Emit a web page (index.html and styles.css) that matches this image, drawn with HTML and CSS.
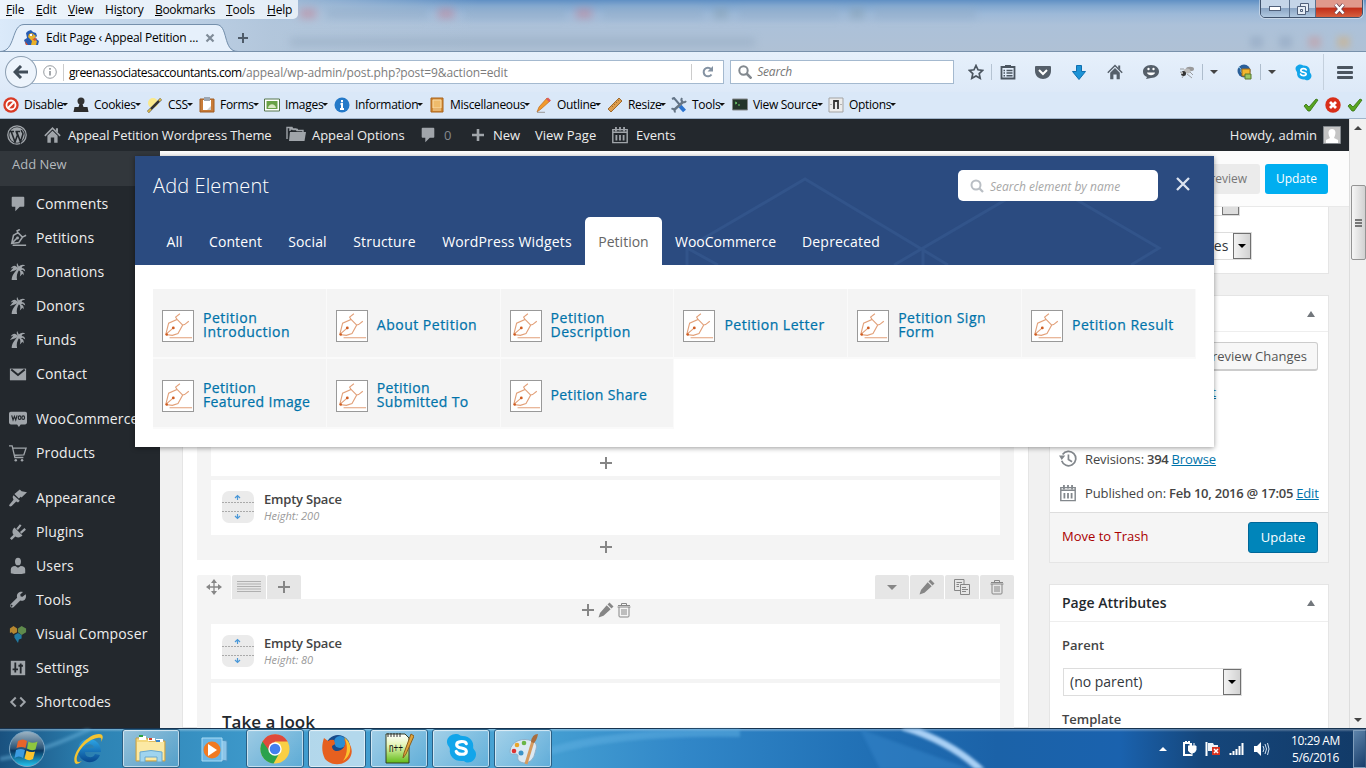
FILE: index.html
```html
<!DOCTYPE html>
<html lang="en">
<head>
<meta charset="utf-8">
<title>Edit Page ‹ Appeal Petition</title>
<link rel="stylesheet" href="styles.css">
</head>
<body>
<svg class="defs" width="0" height="0">
  <defs>
    <symbol id="nib" viewBox="0 0 32 32"><path d="M3 25 6 13 15 9l6 6-5 9-6 2zM15 9l-1.500-2.500L18 3M21 15l2-.5 4.500-3.500M3 25l8-7M7 28.500h24" fill="none" stroke="currentColor" stroke-width="1.200"/><circle cx="11" cy="18" r="1.500" class="nib-dot"/><circle cx="4" cy="25" r="1.300" class="nib-dot"/></symbol>
    <symbol id="bubble" viewBox="0 0 20 20"><path d="M4 2h12q1 0 1 1v9q0 1-1 1h-4l-5 5v-5H4q-1 0-1-1V3q0-1 1-1z" fill="currentColor"/></symbol>
    <symbol id="petition" viewBox="0 0 20 20"><path d="M3 16 5 7l5-3 5 5-4 6zM10 4 9 2l3-1.500M15 9l4-2M3 16l6-6M4 18h15" fill="none" stroke="currentColor" stroke-width="1.700"/><circle cx="9.500" cy="10" r="1.600" fill="currentColor"/></symbol>
    <symbol id="palm" viewBox="0 0 20 20"><path d="M10 6C8 2 4 2 2 6l3-1-4 5 6-2 2-1C6 11 3 14 3 19h6c-1-4 0-8 2-11 2 1 2 4 1 7l3-3 1 2c1-3 0-5-3-6l2-.5 3 2c0-3-2-4-4-4l1-2 3-.5c-2-2-5-1-7 1L9 0C8 2 9 4 10 6z" fill="currentColor"/></symbol>
    <symbol id="mail" viewBox="0 0 20 20"><path d="M1 4h18v13H1z" fill="currentColor"/><path d="m2.500 5 7.500 6 7.500-6" fill="none" stroke="#23282d" stroke-width="2.200"/></symbol>
    <symbol id="woo" viewBox="0 0 20 20"><path d="M2 2h16q2 0 2 2v10q0 2-2 2h-5l-2 3-2-3H2q-2 0-2-2V4q0-2 2-2z" fill="currentColor"/><path d="m3 6 1.500 5L6 7l1.500 4L9 6" fill="none" stroke="#23282d" stroke-width="1.300"/><ellipse cx="11.800" cy="8.500" rx="1.500" ry="2" fill="none" stroke="#23282d" stroke-width="1.300"/><ellipse cx="15.800" cy="8.500" rx="1.500" ry="2" fill="none" stroke="#23282d" stroke-width="1.300"/></symbol>
    <symbol id="cart" viewBox="0 0 20 20"><path d="M0 2h3.500l3 13H16M4 4.500h15l-2.500 7.500-10.500.5" fill="none" stroke="currentColor" stroke-width="1.400"/><circle cx="7.500" cy="18" r="1.400" fill="currentColor"/><circle cx="14.500" cy="18" r="1.400" fill="currentColor"/></symbol>
    <symbol id="brush" viewBox="0 0 20 20"><path d="m9 3 3-2.500 2 2 6 1-6 6-1-1-2 2-5-5zM5 7l7 6-2 2-2-1-5 5q-2 1-3-1l5-6-1-3z" fill="currentColor"/></symbol>
    <symbol id="plug" viewBox="0 0 20 20"><path d="m6 5 9 9c-2 2-5 3-8 1l-4 4-2-2 4-4C3 10 4 7 6 5z" fill="currentColor"/><path d="m9 7 4-5M13 11l5-4.500" stroke="currentColor" stroke-width="2.400"/></symbol>
    <symbol id="user" viewBox="0 0 20 20"><ellipse cx="10" cy="5" rx="3.300" ry="4.300" fill="currentColor"/><path d="M2 18v-4q0-4 5-4l3 2 3-2q5 0 5 4v4q-8 2-16 0z" fill="currentColor"/></symbol>
    <symbol id="wrench" viewBox="0 0 20 20"><path d="m18.500 3.500-3.500 3-2-.5-.5-2 3-3C11 0 8 3 9 7.500L1.500 15q-1 2 .5 3t3 0l7.500-7.500C17 12 20 8 18.500 3.500zM3.500 17a1 1 0 1 1 .1-.1z" fill="currentColor"/></symbol>
    <symbol id="vc" viewBox="0 0 20 20"><path d="m1 4 4-3 4 3v4L5 10l-2-2-2 1z" fill="#b5862f"/><path d="m10 4 4-3 5 3v4l-5 3-4-3z" fill="#5f8a4c"/><path d="m6 11 4-2 4 2v4l-3 1-1 4-4-6z" fill="#227ba3"/></symbol>
    <symbol id="sliders" viewBox="0 0 20 20"><path d="M2 2h16v16H2z" fill="currentColor"/><path d="M7 4v11M4 11.500h6M13 5v11M10.500 7.500h5" stroke="#23282d" stroke-width="2"/></symbol>
    <symbol id="code" viewBox="0 0 20 20"><path d="m7.500 5-5 5 5 5M12.500 5l5 5-5 5" fill="none" stroke="currentColor" stroke-width="2.200"/></symbol>
    <symbol id="cal" viewBox="0 0 20 20"><path d="M2 4h16v14.500H2zM2 7h16" fill="none" stroke="currentColor" stroke-width="1.600"/><path d="M5.500 1v5M14.500 1v5M10 1v4M6 10v6M10 10v6M14 10v6" stroke="currentColor" stroke-width="2"/></symbol>
    <symbol id="trash" viewBox="0 0 16 16"><path d="M2 3.500h12M1.500 5h13M5.500 3V1.500h5V3M3 5v9q0 1 1 1h8q1 0 1-1V5M6 7v6M8 7v6M10 7v6" fill="none" stroke="currentColor"/></symbol>
    <symbol id="pencil" viewBox="0 0 16 16"><path d="m11.500.5 4 4-2 2-4-4zM8.700 3.300l4 4-7.200 6.500L.5 15.500 2 11z" fill="currentColor"/></symbol>
    <symbol id="plus" viewBox="0 0 16 16"><path d="M8 2v12M2 8h12" stroke="currentColor" stroke-width="2"/></symbol>
    <symbol id="spacer" viewBox="0 0 32 32"><rect width="32" height="32" rx="7" fill="#ebebeb"/><path d="M0 11.500h32M0 20.500h32" stroke="#aaa" stroke-dasharray="2 1"/><path d="M15.500 9V4.500M13 7l2.500-2.500L18 7M15.500 23v4.500M13 25l2.500 2.500L18 25" fill="none" stroke="#4a98d8" stroke-width="1.200"/></symbol>
    <symbol id="check" viewBox="0 0 16 16"><path d="m1 9 2-2 3 3 7-8 2 1-8 11H5z" fill="#57a51f" stroke="#326f0d" stroke-width=".8"/></symbol>
    <symbol id="homeic" viewBox="0 0 20 20"><path d="m1 11 9-9 9 9" fill="none" stroke="currentColor" stroke-width="1.800"/><path d="m10 5 6 6v8h-4v-6H8v6H4v-8zM14 2h2.500v5L14 5z" fill="currentColor"/></symbol>
    <symbol id="skype" viewBox="0 0 32 32"><path d="M10 1C14 1 14 3 17 3c8 0 12 6 11 12 0 2 3 3 3 7 0 6-6 10-11 8-1-1-2-1-4-1C8 29 3 23 4 17 4 14 1 13 1 9c0-5 5-8 9-8z" fill="#12a5ea"/><path d="M21 11c-1-3-10-3-10 1 0 5 10 2 10 7 0 4-9 4-10.500 0" fill="none" stroke="#fff" stroke-width="3.200" stroke-linecap="round"/></symbol>
    <linearGradient id="orbg" x1="0" y1="0" x2="0" y2="1"><stop offset="0" stop-color="#9fb5c4"/><stop offset=".48" stop-color="#2b5578"/><stop offset=".55" stop-color="#093660"/><stop offset="1" stop-color="#22c5ef"/></linearGradient>
    <linearGradient id="ieg" x1="0" y1="0" x2="0" y2="1"><stop offset="0" stop-color="#2da6e6"/><stop offset="1" stop-color="#07488f"/></linearGradient>
    <linearGradient id="grn" x1="0" y1="0" x2="0" y2="1"><stop offset="0" stop-color="#fff"/><stop offset=".4" stop-color="#e4f5b4"/><stop offset="1" stop-color="#61bb19"/></linearGradient>
  </defs>
</svg>

<div class="screen">
  <header class="titlebar">
    <div class="ghosts"><i class="red"></i><i class="txt"></i><i class="red"></i><i class="txt"></i><i class="red"></i><i class="txt"></i><i class="grey"></i><i class="txt"></i><i class="grey"></i><i class="txt"></i></div>
    <div class="ghost-url"></div>
    <div class="ghost-tools"><i></i><i></i><i class="r"></i><i class="o"></i></div>
    <nav class="menu"><span><u>F</u>ile</span><span><u>E</u>dit</span><span><u>V</u>iew</span><span>Hi<u>s</u>tory</span><span><u>B</u>ookmarks</span><span><u>T</u>ools</span><span><u>H</u>elp</span></nav>
    <div class="tabstrip">
      <svg class="tabshape" width="250" height="29" viewBox="0 0 250 29"><path d="M0 28C16 28 11 1 24 1H216C229 1 222 28 238 28H250V29H0z" fill="#e6f0fb"/><path d="M0 27.500C16 27.500 11 .5 24 .5H216C229 .5 222 27.500 238 27.500H250" fill="none" stroke="#7590ac"/></svg>
      <div class="tab">
        <svg width="17" height="16" viewBox="0 0 17 16"><path d="M2 3 4 1l3-1 2 2 3 1 1 3-2 2 4 3-1 4H2l-2-5 3-2z" fill="#285bb0"/><path d="m5 4 3-1 4 3-2 3 3 2-1 4H7l1-4-4-4z" fill="#e8b12a"/><path d="m1 11 3 4H2zM8 9l5-1-2 3z" fill="#e5502a"/><path d="M6 4h3v2H6z" fill="#fff"/><path d="M8 4.500h1v1H8z" fill="#111"/></svg>
        <span class="tabname">Edit Page ‹ Appeal Petition ...</span>
        <svg width="10" height="10" viewBox="0 0 10 10"><path d="m1.500 1.500 7 7m0-7-7 7" stroke="#7f8b98" stroke-width="2.200"/></svg>
      </div>
      <svg class="newtab" width="12" height="12" viewBox="0 0 12 12"><path d="M6 1v10M1 6h10" stroke="#4e5b69" stroke-width="2"/></svg>
    </div>
    <div class="winbtns">
      <span class="wb"><svg width="13" height="6"><rect x=".5" y=".5" width="11" height="4" fill="#fff" stroke="#50607a"/></svg></span>
      <span class="wb mid"><svg width="12" height="12"><path d="M3.500 3V.5h8v8H9M.5 3.500h8v8h-8zM3.500 6.500h2v2h-2z" fill="#e6edf5" stroke="#50607a"/></svg></span>
      <span class="wb close"><svg width="13" height="12" viewBox="0 0 13 12"><path d="m2.500 1.500 8 9m0-9-8 9" stroke="#6a4352" stroke-width="4"/><path d="m2.500 1.500 8 9m0-9-8 9" stroke="#fff" stroke-width="2.500"/></svg></span>
    </div>
  </header>

  <div class="navbar">
    <span class="back"><svg width="16" height="14" viewBox="0 0 16 14"><path d="M8 1 2 7l6 6M2.500 7H15" fill="none" stroke="#414d59" stroke-width="3"/></svg></span>
    <div class="urlbar">
      <svg class="info" width="14" height="14" viewBox="0 0 14 14"><circle cx="7" cy="7" r="6.300" fill="none" stroke="#969ba0"/><path d="M7 6v4.500M7 3v1.700" stroke="#858a90" stroke-width="1.500"/></svg>
      <span class="url"><b>greenassociatesaccountants.com</b>/appeal/wp-admin/post.php?post=9&amp;action=edit</span>
      <span class="reload"><svg width="12" height="12" viewBox="0 0 12 12"><path d="M9.500 8.500A4.300 4.300 0 1 1 9 3" fill="none" stroke="#8492a2" stroke-width="2"/><path d="M11 0v5.500H5.500z" fill="#8492a2"/></svg></span>
    </div>
    <div class="searchbar"><svg width="14" height="14" viewBox="0 0 14 14"><circle cx="5.500" cy="5.500" r="4.200" fill="none" stroke="#83898f" stroke-width="2"/><path d="m8.500 8.500 5 5" stroke="#83898f" stroke-width="2.600"/></svg><em>Search</em></div>
    <div class="tools">
      <span class="t w31"><svg width="16" height="16" viewBox="0 0 16 16"><path d="m8 1.500 2 4.300 4.700.6-3.500 3.200 1 4.700L8 12l-4.200 2.300 1-4.700L1.300 6.400 6 5.800z" fill="none" stroke="#4b5560" stroke-width="1.700"/></svg></span>
      <span class="t w31 sepl"><svg width="16" height="16" viewBox="0 0 16 16"><path d="M1.500 3h13v11.500h-13z" fill="none" stroke="#4b5560" stroke-width="1.800"/><path d="M5 1h6v3H5z" fill="#4b5560"/><path d="M3.500 6.500H5M6.500 6.500h6M3.500 9H5M6.500 9h6M3.500 11.700H5M6.500 11.700h6" stroke="#4b5560" stroke-width="1.500"/></svg></span>
      <span class="t w36"><svg width="16" height="15" viewBox="0 0 16 15"><path d="M1 1h14q1 0 1 1v4c0 5-4 8-8 8S0 11 0 6V2q0-1 1-1z" fill="#555f6a"/><path d="m4 5 4 4 4-4" fill="none" stroke="#fff" stroke-width="2"/></svg></span>
      <span class="t w36"><svg width="14" height="15" viewBox="0 0 14 15"><path d="M4.500.5h5v6h4L7 14.500.5 6.500h4z" fill="#1c93d6" stroke="#0e6fb0"/></svg></span>
      <span class="t w36"><svg width="16" height="16" viewBox="0 0 20 20" color="#555f6a"><use href="#homeic"/></svg></span>
      <span class="t w36"><svg width="16" height="16" viewBox="0 0 16 16"><path d="M8 1c5 0 8 3 8 6.500S13 14 8 14l-5 1 1-2C1 12 0 10 0 7.500 0 4 3 1 8 1z" fill="#555f6a"/><path d="M4 8.500h8c-.5 3.500-7.500 3.500-8 0z" fill="#fff"/><circle cx="5.500" cy="5" r="1.200" fill="#fff"/><circle cx="10.500" cy="5" r="1.200" fill="#fff"/></svg></span>
      <span class="t w36"><svg width="16" height="14" viewBox="0 0 16 14"><path d="M1 4h4M3 13l2-3M1 7l3 1M8 9l5 4M11 7l3 3" stroke="#888" stroke-width=".8"/><ellipse cx="11" cy="4" rx="4" ry="2.200" fill="#999"/><ellipse cx="8" cy="6" rx="3.500" ry="2.500" fill="#bdbdbd"/><circle cx="4.500" cy="8.500" r="2.500" fill="#333"/><circle cx="3" cy="8" r="1" fill="#ddd"/></svg></span>
      <span class="t w22 sepl2"><i class="caret"></i></span>
      <span class="t w36"><svg width="16" height="16" viewBox="0 0 16 16"><circle cx="7" cy="7" r="6.500" fill="#2a5f99"/><path d="M2 3q3 2 2 5l4 3 4 1" stroke="#84c7e8" fill="none"/><path d="M5 5h8v7H5z" fill="#f3b62e" stroke="#a66d13"/><path d="M8 10h6v5H8z" fill="#9ac561" stroke="#58792f"/></svg></span>
      <span class="t w22 sepl2"><i class="caret"></i></span>
      <span class="t w36"><svg width="17" height="17"><use href="#skype"/></svg></span>
      <span class="t burger"><i></i><i></i><i></i></span>
    </div>
  </div>

  <div class="devbar">
    <span class="d d1"><svg width="16" height="16" viewBox="0 0 16 16"><circle cx="8" cy="8" r="7.700" fill="#d93a25"/><circle cx="8" cy="8" r="4.500" fill="none" stroke="#fff" stroke-width="1.800"/><path d="m5 11 6-6" stroke="#fff" stroke-width="2"/></svg>Disable<i></i></span>
    <span class="d d2"><svg width="16" height="16" viewBox="0 0 16 16"><circle cx="8" cy="4" r="3.500" fill="#333"/><path d="M6.500 7h3l1 3h4l1 5H.5l1-5h4z" fill="#2c2c2c"/></svg>Cookies<i></i></span>
    <span class="d d3"><svg width="16" height="16" viewBox="0 0 16 16"><circle cx="6" cy="6" r="5" fill="#fae98c"/><path d="m1 15 13-13" stroke="#333" stroke-width="2.500"/><path d="m12 4 2-2M1 15l3-3" stroke="#d8b84a" stroke-width="2"/></svg>CSS<i></i></span>
    <span class="d d4"><svg width="16" height="16" viewBox="0 0 16 16"><path d="M1 2h14v13H1z" fill="#c97c38" stroke="#a05c22"/><path d="M4 3h8v10H4z" fill="#fff"/><path d="M5 0h6v4H5z" fill="#9da6b1"/><path d="M8 13h4V9z" fill="#ccc"/></svg>Forms<i></i></span>
    <span class="d d5"><svg width="16" height="16" viewBox="0 0 16 16"><path d="M.5 2h15v12H.5z" fill="#fff" stroke="#54764c"/><path d="M2.500 4h11v8h-11z" fill="#69a246"/><path d="M4 11c1-5 7-5 8 0z" fill="#d9e8c4"/></svg>Images<i></i></span>
    <span class="d d6"><svg width="16" height="16" viewBox="0 0 16 16"><circle cx="8" cy="8" r="7.500" fill="#2479c8"/><path d="M8 3v2.200M6.500 7H8v5m-2 0h4" stroke="#fff" stroke-width="2" fill="none"/></svg>Information<i></i></span>
    <span class="d d7"><svg width="16" height="16" viewBox="0 0 16 16"><path d="M2 1h12v14H2z" fill="#d38b34" stroke="#a9631a"/><path d="M4 3h8v8H4zM4 13h8" fill="#efbb6b" stroke="#fadca8"/></svg>Miscellaneous<i></i></span>
    <span class="d d8"><svg width="16" height="16" viewBox="0 0 16 16"><path d="m1 15 2-5 8-9 3 3-9 8z" fill="#f29a2c" stroke="#bf6a1c" stroke-width=".7"/><path d="m10 2 2-1.500 3 3-2 1.500z" fill="#dc5c5c"/><path d="M1 15.300h8" stroke="#999"/></svg>Outline<i></i></span>
    <span class="d d9"><svg width="16" height="16" viewBox="0 0 16 16"><path d="m1 12 11-11 3 3L4 15z" fill="#dc9c4c" stroke="#9e6a2e"/><path d="m5 9 1 1m1-3 1 1m1-3 1 1m1-3 1 1" stroke="#875a20" stroke-width=".7"/></svg>Resize<i></i></span>
    <span class="d d10"><svg width="16" height="16" viewBox="0 0 16 16"><path d="m1 2 2-1 6 7" fill="none" stroke="#637487" stroke-width="2"/><path d="m9 9 4.500 5" stroke="#2b73cf" stroke-width="4"/><path d="m3 13 9-8" stroke="#657585" stroke-width="2.400"/><path d="M11 1c-2 3 2 6 4 3M.5 12q3-1 3.500 3.500" fill="none" stroke="#657585" stroke-width="2"/></svg>Tools<i></i></span>
    <span class="d d11"><svg width="16" height="14" viewBox="0 0 16 14"><path d="M.5 1h15v11H.5z" fill="#24352a" stroke="#85898c"/><path d="m3 4 2 1-2 1m3 1h2" fill="none" stroke="#6dd06d"/></svg>View Source<i></i></span>
    <span class="d d12"><svg width="16" height="16" viewBox="0 0 16 16"><path d="M1 1h14v14H1z" fill="#ececec" stroke="#a3a3a3"/><path d="M6 12V4h4v8" fill="none" stroke="#333" stroke-width="1.800"/><path d="M3 7v1M13 7v1" stroke="#777"/></svg>Options<i></i></span>
    <span class="status"><svg width="16" height="16"><use href="#check"/></svg><svg width="16" height="16" viewBox="0 0 16 16"><circle cx="8" cy="8" r="7.700" fill="#d92e19"/><path d="m5 5 6 6m0-6-6 6" stroke="#fff" stroke-width="2.800"/></svg><svg width="16" height="16"><use href="#check"/></svg></span>
  </div>

  <div class="viewport">
    <div class="page">
      <div class="adminbar">
        <span class="a a1"><svg width="20" height="20" viewBox="0 0 20 20"><circle cx="10" cy="10" r="9.200" fill="none" stroke="currentColor" stroke-width="1.300"/><circle cx="10" cy="10" r="7.700" fill="currentColor"/><path d="m4 6 4 11 2.500-7-1.500-4M9.500 6l4 11 2.500-8c0-2-2-2-1.500-4M2.500 6.500H7M8.500 6.500h4.500" fill="none" stroke="#23282d" stroke-width="1.600"/></svg></span>
        <span class="a a2"><svg width="17" height="18" viewBox="0 0 20 20"><use href="#homeic"/></svg>Appeal Petition Wordpress Theme</span>
        <span class="a a3"><svg width="20" height="18" viewBox="0 0 20 18"><path d="M1 13V1.500h5l1 2h5M4 5V3h6l1 1.500h6V6" fill="none" stroke="currentColor" stroke-width="1.400"/><path d="M4 6h16l-1.500 9H3z" fill="currentColor"/></svg>Appeal Options</span>
        <span class="a a4"><svg width="18" height="18"><use href="#bubble"/></svg><small>0</small></span>
        <span class="a a5"><svg width="14" height="14" viewBox="0 0 14 14"><path d="M7 1v12M1 7h12" stroke="currentColor" stroke-width="2.600"/></svg>New</span>
        <span class="a a6">View Page</span>
        <span class="a a7"><svg width="18" height="20" viewBox="0 0 20 20"><use href="#cal"/></svg>Events</span>
        <span class="a a8">Howdy, admin<svg width="18" height="18" viewBox="0 0 18 18"><path d="M.5.5h17v17H.5z" fill="#c4c4c4" stroke="#82878c"/><path d="M3 17v-3l4-2C4 6 6 3 9 3s5 3 2 9l4 2v3z" fill="#fff"/></svg></span>
      </div>
      <div class="body">
        <aside class="side">
          <div class="sub">Add New</div>
          <a><svg><use href="#bubble"/></svg>Comments</a>
          <a><svg><use href="#petition"/></svg>Petitions</a>
          <a><svg><use href="#palm"/></svg>Donations</a>
          <a><svg><use href="#palm"/></svg>Donors</a>
          <a><svg><use href="#palm"/></svg>Funds</a>
          <a><svg><use href="#mail"/></svg>Contact</a>
          <a class="gap"><svg><use href="#woo"/></svg>WooCommerce</a>
          <a><svg><use href="#cart"/></svg>Products</a>
          <a class="gap"><svg><use href="#brush"/></svg>Appearance</a>
          <a><svg><use href="#plug"/></svg>Plugins</a>
          <a><svg><use href="#user"/></svg>Users</a>
          <a><svg><use href="#wrench"/></svg>Tools</a>
          <a><svg><use href="#vc"/></svg>Visual Composer</a>
          <a><svg><use href="#sliders"/></svg>Settings</a>
          <a><svg><use href="#code"/></svg>Shortcodes</a>
        </aside>
        <main class="main">
          <div class="topstrip"><span class="btn-prev">Preview</span><span class="btn-upd">Update</span></div>
          <div class="cols">
            <section class="editor">
              <div class="row first">
                <div class="block tall"><svg class="ic"><use href="#plus"/></svg></div>
                <div class="block el"><svg width="32" height="32"><use href="#spacer"/></svg><div><strong>Empty Space</strong><em>Height: 200</em></div></div>
                <div class="addrow"><svg class="ic"><use href="#plus"/></svg></div>
              </div>
              <div class="controls">
                <span class="c light"><svg width="16" height="16" viewBox="0 0 16 16"><path d="M8 2v12M2 8h12" stroke="currentColor" stroke-width="1.300"/><path d="m8 0 3 4H5zM8 16l3-4H5zM0 8l4-3v6zM16 8l-4-3v6z" fill="currentColor"/></svg></span>
                <span class="c"><svg width="24" height="12"><path d="M0 .5h24M0 3h24M0 5.500h24M0 8h24M0 10.500h24" stroke="#b0b0b0"/></svg></span>
                <span class="c"><svg class="ic"><use href="#plus"/></svg></span>
                <span class="c push"><i class="down"></i></span>
                <span class="c"><svg class="ic"><use href="#pencil"/></svg></span>
                <span class="c"><svg width="16" height="16" viewBox="0 0 16 16"><path d="M10 5V.500H.5v11H6M6.500 5.500h9v10h-9zM8 8.500h4M8 10.500h6M8 12.500h4M2.500 3.500H8M2.500 5.500H5M2.500 7.500H5" fill="none" stroke="currentColor"/></svg></span>
                <span class="c"><svg class="ic"><use href="#trash"/></svg></span>
              </div>
              <div class="row second">
                <div class="colctl"><svg class="ic"><use href="#plus"/></svg><svg class="ic"><use href="#pencil"/></svg><svg class="ic"><use href="#trash"/></svg></div>
                <div class="block el"><svg width="32" height="32"><use href="#spacer"/></svg><div><strong>Empty Space</strong><em>Height: 80</em></div></div>
                <div class="block look"><h2>Take a look</h2></div>
              </div>
            </section>
            <section class="meta">
              <div class="box b1"><div class="sel-frag"><i></i></div><div class="select s1">Yes<span class="selbtn"><i></i></span></div></div>
              <div class="box b2">
                <h3><i class="up"></i></h3>
                <div class="pub">
                  <span class="pc">Preview Changes</span>
                  <a class="edfrag">Edit</a>
                  <p class="rev"><svg width="18" height="18" viewBox="0 0 20 20"><path d="M4 5a8 8 0 1 1-1 7M10.500 5v5.500l4 2.500" fill="none" stroke="currentColor" stroke-width="1.900"/><path d="m0 6 7 0-4 5z" fill="currentColor"/></svg>Revisions: <b>394</b> <a>Browse</a></p>
                  <p class="pubon"><svg width="18" height="20" viewBox="0 0 20 20"><use href="#cal"/></svg>Published on: <b>Feb 10, 2016 @ 17:05</b> <a>Edit</a></p>
                </div>
                <div class="foot"><span class="trash">Move to Trash</span><span class="upd">Update</span></div>
              </div>
              <div class="box b3">
                <h3>Page Attributes<i class="up"></i></h3>
                <div class="attr"><label>Parent</label><div class="select s2">(no parent)<span class="selbtn"><i></i></span></div><label>Template</label></div>
              </div>
            </section>
          </div>
        </main>
      </div>
    </div>
    <div class="scroll"><i class="sup"></i><span class="thumb"><i></i><i></i><i></i></span><i class="sdn"></i></div>

    <div class="modal">
      <div class="mhead">
        <svg class="hex" width="1079" height="109" viewBox="135 156 1079 109"><path d="M687 265V248L805 179 948 265M687 248l31 17M894 265l147-86 118 69-28 17M923 248v17" fill="none" stroke="#32548a" stroke-width="3"/></svg>
        <div class="mtop"><h1>Add Element</h1>
          <div class="msearch"><svg width="14" height="14" viewBox="0 0 14 14"><circle cx="6" cy="6" r="4.500" fill="none" stroke="#b9bec4" stroke-width="2"/><path d="m9 9 4 4" stroke="#b9bec4" stroke-width="2.300"/></svg><em>Search element by name</em></div>
          <svg class="x" width="14" height="14" viewBox="0 0 14 14"><path d="m1 1 12 12M13 1 1 13" stroke="#dce3ef" stroke-width="2.300"/></svg></div>
        <div class="mtabs"><span>All</span><span>Content</span><span>Social</span><span>Structure</span><span>WordPress Widgets</span><span class="on">Petition</span><span>WooCommerce</span><span>Deprecated</span></div>
      </div>
      <div class="grid">
        <div class="cell"><svg><use href="#nib"/></svg><span>Petition<br>Introduction</span></div>
        <div class="cell"><svg><use href="#nib"/></svg><span>About Petition</span></div>
        <div class="cell"><svg><use href="#nib"/></svg><span>Petition<br>Description</span></div>
        <div class="cell"><svg><use href="#nib"/></svg><span>Petition Letter</span></div>
        <div class="cell"><svg><use href="#nib"/></svg><span>Petition Sign<br>Form</span></div>
        <div class="cell"><svg><use href="#nib"/></svg><span>Petition Result</span></div>
        <div class="cell"><svg><use href="#nib"/></svg><span>Petition<br>Featured Image</span></div>
        <div class="cell"><svg><use href="#nib"/></svg><span>Petition<br>Submitted To</span></div>
        <div class="cell"><svg><use href="#nib"/></svg><span>Petition Share</span></div>
      </div>
    </div>
  </div>

  <footer class="taskbar">
    <svg class="swoosh" width="1366" height="40" viewBox="0 0 1366 40"><path d="M0 30Q40 24 90 0" stroke="#6db5dd" stroke-width="4" opacity=".5" fill="none"/><path d="M550 22Q620 2 740 4" stroke="#5fb0e2" stroke-width="8" opacity=".5" fill="none"/><path d="M903-2Q950 12 982 42" stroke="#a9d0f5" stroke-width="7" fill="none"/><path d="m860 0 110 40H880z" fill="#3585ca" opacity=".5"/></svg>
    <span class="k start"><svg width="38" height="38" viewBox="0 0 38 38"><circle cx="19" cy="19" r="17.500" fill="url(#orbg)" stroke="#7ea7c4"/><path d="M10 11q5-3 9 0l-1.500 7q-4-2-9 0z" fill="#e8642a"/><path d="M20.500 11.500q4 2.500 9 0l-2 8q-4 2-8.500-1z" fill="#8ec63f"/><path d="M8 20q5-2 9 0l-2 8q-4-3-8.500 0z" fill="#3b9be0"/><path d="M18.500 20.500q4 2.500 8.500 1l-2 7.500q-4 2.500-8.500-.5z" fill="#fbc42d"/></svg></span>
    <span class="k ie"><svg width="32" height="32" viewBox="0 0 32 32"><path d="M6 17C6 2 29 2 29 19H13c0 6 8 7 10 2l5 1C23 34 6 30 6 17zm7-2h9c0-5-9-5-9 0z" fill="url(#ieg)"/><path d="M4 31C-3 25 13 1 27 1c4 0 5 3 2 8 1-4 0-5-4-4C13 7 3 22 5 28q1 2 5 0-3 3-6 3z" fill="#f4c431"/></svg></span>
    <span class="k win"><svg width="34" height="34" viewBox="0 0 34 34"><path d="M2 6h11l2 3h16v20H2z" fill="#f4d87c" stroke="#c7a048"/><path d="M5 4h7v4H5zM14 6h7v3h-7zM22 7h7v3h-7z" fill="#fff"/><path d="M5 3h4v2H5z" fill="#2fa343"/><path d="M15 6h3v2h-3z" fill="#d8402a"/><path d="M22 8h4v2h-4z" fill="#3a85c9"/><path d="M3 10h27v18H3z" fill="#fbe9a4"/><path d="M6 30V20q11-3 22 0v10h-5v-5H11v5z" fill="#9fd4ef" stroke="#6ba8cd"/></svg></span>
    <span class="k wmp"><svg width="28" height="28" viewBox="0 0 28 28"><path d="m20 5 6 1v20l-6-1z" fill="#8cc4e8" stroke="#4c94c2"/><path d="M1 3h20v23H1z" fill="#69b5e5" stroke="#a9dcf4"/><circle cx="11" cy="15" r="8.500" fill="#f17a22"/><path d="m7 9 9 6-9 6z" fill="#fff"/></svg></span>
    <span class="k win"><svg width="30" height="30" viewBox="0 0 30 30"><circle cx="15" cy="15" r="14.500" fill="#f9cf45"/><path d="M15 15 2.500 7.500a14.500 14.500 0 0 0 11 22L20 18z" fill="#2ba24c"/><path d="M2.500 7.500a14.500 14.500 0 0 1 25.200 0H15l-6 9z" fill="#df4a3c"/><circle cx="15" cy="15" r="6.700" fill="#fff"/><circle cx="15" cy="15" r="5.300" fill="#447ff0"/></svg></span>
    <span class="k win act"><svg width="30" height="32" viewBox="0 0 30 32"><circle cx="16" cy="14" r="12" fill="#184b8b"/><circle cx="18" cy="9" r="6" fill="#2b8ed3"/><path d="M2 5 6 8q3-2 6-1l1 4-3 2c0 7 9 6 12 1 2-3 1-6 0-8 8 4 10 14 5 20-6 7-18 7-24 0C-1 18 0 11 2 5z" fill="#e6601f"/><path d="M22 4c9 6 8 19-1 24 5-7 5-17 1-24z" fill="#fbc22f"/></svg></span>
    <span class="k win"><svg width="30" height="33" viewBox="0 0 30 33"><path d="M2 2h19l4 4v25H2z" fill="url(#grn)" stroke="#323f24"/><path d="M4 1v4M7 1v4M10 1v4M13 1v4M16 1v4" stroke="#333"/><text x="5" y="20" class="npp" textLength="14" lengthAdjust="spacingAndGlyphs">n++</text><path d="m19 26 1-5L27 2l3 2-8 18z" fill="#e2a53b" stroke="#8a5f1f"/></svg></span>
    <span class="k win"><svg width="31" height="31"><use href="#skype"/></svg></span>
    <span class="k win"><svg width="32" height="32" viewBox="0 0 32 32"><path d="M3 18C4 8 16 4 25 8c7 3 4 7 3 12-2 10-11 12-16 8-3-3 1-6-3-7-3 0-6 1-6-3z" fill="#dce9f3" stroke="#8fb0c9"/><circle cx="7" cy="18" r="2.300" fill="#d33"/><circle cx="10" cy="12" r="2.300" fill="#e9a62b"/><circle cx="17" cy="10" r="2.300" fill="#6ab545"/><circle cx="14" cy="20" r="2.500" fill="#3d93c7"/><path d="m19 31 7-23" stroke="#d69a5e" stroke-width="3"/><path d="M24 9q1-8 7-8-1 6-4 9z" fill="#a86d3e"/></svg></span>
    <div class="tray">
      <i class="tup"></i>
      <svg width="16" height="16" viewBox="0 0 16 16"><path d="M9 2H3v12h7V2M5 0v3M8 0v3" stroke="#fff" stroke-width="2" fill="none"/><path d="M7 5h8v4q-1 3-4 3T7 9zM9 5V2M13 5V2M11 12v3" fill="#fff" stroke="#fff"/><path d="M6.500 4v6q2 3 4 3" fill="none" stroke="#17406f"/></svg>
      <svg width="16" height="16" viewBox="0 0 16 16"><path d="M1.500 1v14" stroke="#fff" stroke-width="2"/><path d="M3 2h5l1 2h4v6H3z" fill="#eef3f8"/><path d="M7 6h8v8H7z" fill="#d8321f"/><path d="m9 8 4 4m0-4-4 4" stroke="#fff" stroke-width="1.500"/></svg>
      <svg width="16" height="14" viewBox="0 0 16 14"><path d="M1.500 11v2M4.500 9v4M7.500 7v6M10.500 4v9M13.500 1v12" stroke="#fff" stroke-width="2"/></svg>
      <svg class="vol" width="17" height="16" viewBox="0 0 17 16"><path d="M1 5h3l4-4v14l-4-4H1z" fill="#fff"/><path d="M10 5q2 3 0 6M12 3q3 5 0 10M14.500 2q3 6 0 12" fill="none" stroke="#cfe0f1"/></svg>
      <div class="clock">10:29 AM<br>5/6/2016</div>
      <div class="showdesk"></div>
    </div>
  </footer>
</div>
</body>
</html>
```
FILE: styles.css
```css
* { box-sizing: border-box; }
body { margin: 0; overflow: hidden; }
svg { flex: none; display: block; }
.defs { position: absolute; }
.screen { width: 1366px; height: 768px; display: flex; flex-direction: column; font: 13px/1.4 "Open Sans", sans-serif; color: #444; overflow: hidden; white-space: nowrap; }
i { display: block; flex: none; }

/* browser title bar */
.titlebar { position: relative; height: 52px; flex: none; overflow: hidden; border-bottom: 1px solid #7891ab; background: linear-gradient(90deg, #dbeafa 0, #c5d8ec 8%, rgba(179,199,220,.8) 20%, rgba(175,195,217,0) 35%), linear-gradient(#6090c4 0, #82a8d0 6px, #9db9d8 14px, #acc1d9 25px, #afc1d5 100%); }
.ghosts { position: absolute; left: 300px; top: 9px; display: flex; gap: 10px; filter: blur(4px); opacity: .55; }
.ghosts i { height: 9px; }
.ghosts .red { width: 16px; background: #c87a8c; }
.ghosts .grey { width: 14px; background: #7d97a8; }
.ghosts .txt { width: 102px; background: #8ea9c5; }
.ghost-url { position: absolute; left: 290px; top: 38px; width: 465px; height: 8px; background: #95abc2; filter: blur(4px); opacity: .6; }
.ghost-tools { position: absolute; left: 1250px; top: 36px; display: flex; gap: 16px; filter: blur(3px); opacity: .5; }
.ghost-tools i { width: 13px; height: 12px; background: #8fa5c0; }
.ghost-tools .r { background: #c79aa0; }
.ghost-tools .o { background: #d3b07e; }
.menu { position: absolute; left: 0; top: 0; width: 298px; height: 19px; display: flex; background: rgba(240,246,252,.85); border-radius: 0 0 5px 0; color: #000; font-size: 12px; line-height: 20px; padding-left: 6px; letter-spacing: -.2px; }
.menu span { flex: none; }
.menu span:nth-child(1) { width: 30px; } .menu span:nth-child(2) { width: 32px; } .menu span:nth-child(3) { width: 37px; }
.menu span:nth-child(4) { width: 50px; } .menu span:nth-child(5) { width: 71px; letter-spacing: -.35px; } .menu span:nth-child(6) { width: 41px; }
.tabstrip { position: absolute; left: 0; top: 24px; width: 260px; height: 28px; display: flex; align-items: center; }
.tabshape { position: absolute; left: 0; top: 0; }
.tab { position: relative; width: 217px; padding-left: 24px; display: flex; align-items: center; color: #000; font-size: 12px; letter-spacing: -.22px; }
.tabname { width: 159px; margin-left: 5px; }
.newtab { position: relative; margin-left: 20px; }
.winbtns { position: absolute; left: 1260px; top: -1px; width: 103px; height: 19px; display: flex; border: 1px solid #3f526c; border-radius: 0 0 5px 5px; overflow: hidden; box-shadow: 0 0 0 1px rgba(255,255,255,.4); }
.wb { width: 28px; display: flex; align-items: center; justify-content: center; background: linear-gradient(#c4d5e8 45%, #8ba6c5 50%, #b1c8df); }
.mid { width: 27px; border-left: 1px solid #5b718d; border-right: 1px solid #5b718d; }
.close { flex: 1; background: linear-gradient(#e0998c 40%, #c2301b 50%, #d7603f); }

/* navigation toolbar */
.navbar { height: 40px; flex: none; display: flex; align-items: center; padding-left: 5px; background: linear-gradient(#e6f0fb, #dde9f8); }
.back { position: relative; z-index: 1; width: 32px; height: 32px; border-radius: 50%; border: 1px solid #8d9fb2; background: #edf4fc; display: flex; align-items: center; justify-content: center; }
.urlbar { width: 705px; height: 24px; margin-left: -17px; padding-left: 22px; display: flex; align-items: center; background: #fff; border: 1px solid #a4b9cf; font-size: 12px; }
.url { border-left: 1px solid #ccc; line-height: 17px; margin-left: 6px; padding-left: 5px; color: #7c7c7c; width: 628px; letter-spacing: -.13px; }
.url b { font-weight: 400; color: #000; letter-spacing: -.42px; }
.reload { border-left: 1px solid #ccc; height: 16px; padding: 2px 0 0 10px; }
.searchbar { width: 224px; height: 24px; margin-left: 6px; padding-left: 7px; background: #fff; border: 1px solid #a4b9cf; display: flex; align-items: center; gap: 5px; color: #777; font-size: 12px; letter-spacing: -.2px; }
.tools { display: flex; align-items: center; margin-left: 6px; height: 40px; }
.t { display: flex; flex: none; align-items: center; justify-content: center; }
.w31 { width: 31px; } .w36 { width: 36px; } .w22 { width: 22px; height: 16px; }
.sepl { border-left: 1px solid #b5c3d2; height: 16px; }
.w31.sepl { width: 33px; margin-right: 1px; }
.sepl2 { border-left: 1px solid #aebdcd; margin-left: -3px; }
.caret { border: 4px solid transparent; border-top-color: #444; border-bottom: 0; }
.w22.sepl2 + .w36 { margin-left: 3px; }
.burger { height: 36px; width: 43px; border-left: 1px solid #c4d0dd; flex-direction: column; gap: 2px; margin-left: 2px; }
.burger i { width: 16px; height: 3px; border-radius: 1px; background: #4b5560; }

/* developer toolbar */
.devbar { height: 27px; flex: none; display: flex; align-items: center; padding-left: 3px; background: #dae8f8; border-bottom: 1px solid #a0b4ca; color: #000; font-size: 12px; letter-spacing: -.3px; }
.d { flex: none; display: flex; align-items: center; }
.d svg { margin-right: 5px; }
.d i { border: 3px solid transparent; border-top-color: #111; border-bottom: 0; margin-left: -1px; }
.d1 { width: 70px; } .d2 { width: 74px; } .d3 { width: 52px; } .d4 { width: 65px; } .d5 { width: 70px; } .d6 { width: 95px; }
.d7 { width: 107px; } .d8 { width: 71px; } .d9 { width: 64px; } .d10 { width: 61px; } .d11 { width: 96px; }
.status { display: flex; gap: 6px; margin-left: auto; padding-right: 3px; }

/* web page */
.viewport { position: relative; height: 609px; flex: none; display: flex; overflow: hidden; }
.page { width: 1349px; display: flex; flex-direction: column; }
.adminbar { height: 32px; flex: none; background: #23282d; color: #eee; display: flex; align-items: center; padding-left: 7px; }
.a { flex: none; display: flex; align-items: center; }
.a svg { color: #a0a5aa; }
.a small { font-size: 13px; color: #85898d; }
.a1 { width: 37px; } .a2 { width: 242px; gap: 7px; letter-spacing: -.1px; } .a3 { width: 133px; gap: 6px; letter-spacing: -.05px; } .a4 { width: 52px; gap: 7px; } .a5 { width: 64px; gap: 8px; } .a6 { width: 76px; } .a7 { gap: 7px; }
.a8 { margin-left: auto; padding-right: 8px; gap: 6px; }
.body { flex: 1; display: flex; min-height: 0; }
.side { width: 160px; flex: none; background: #23282d; overflow: hidden; }
.sub { height: 35px; background: #32373c; color: #b4b9be; padding: 4px 0 0 12px; margin-bottom: 1px; }
.side a { display: flex; align-items: center; height: 34px; padding-left: 9px; font-size: 14px; color: #eee; letter-spacing: .13px; }
.side a.gap { margin-top: 11px; }
.side a svg { width: 18px; height: 18px; margin-right: 9px; color: #a0a5aa; }
.main { flex: 1; min-width: 0; background: #f1f1f1; overflow: hidden; }
.topstrip { height: 56px; background: #fcfcfc; border-bottom: 1px solid #e9e9e9; display: flex; justify-content: flex-end; padding: 13px 21px 0 0; gap: 5px; }
.topstrip span { height: 30px; line-height: 30px; border-radius: 3px; text-align: center; }
.btn-prev { width: 70px; background: #ebebeb; color: #777; font-size: 12px; }
.btn-upd { width: 63px; background: #00aef0; color: #fff; font-size: 12px; }
.cols { display: flex; padding-left: 22px; }
.editor { width: 847px; height: 521px; background: #fff; border: 1px solid #e5e5e5; border-top: 0; padding: 0 14px; }
.row { width: 817px; background: #f4f4f4; padding: 0 14px; }
.first { height: 353px; }
.block { background: #fff; }
.tall { height: 269px; margin-bottom: 4px; display: flex; align-items: flex-end; justify-content: center; padding-bottom: 5px; }
.ic { width: 16px; height: 16px; color: #868686; }
.el { height: 55px; display: flex; padding: 11px 11px; gap: 10px; }
.el strong { display: block; font: 600 13px/17px "Open Sans", sans-serif; color: #444; letter-spacing: -.2px; }
.el em { display: block; font-size: 11px; line-height: 15px; color: #999; }
.addrow { height: 24px; display: flex; align-items: center; justify-content: center; }
.controls { display: flex; gap: 1px; margin-top: 15px; height: 24px; width: 817px; }
.c { width: 34px; background: #e6e6e6; display: flex; align-items: center; justify-content: center; color: #868686; border-radius: 2px 2px 0 0; }
.light { background: #f4f4f4; }
.push { margin-left: auto; }
.down { border: 5px solid transparent; border-top-color: #868686; border-bottom: 0; }
.second { height: 129px; }
.colctl { height: 25px; display: flex; align-items: flex-start; padding-top: 3px; justify-content: center; gap: 2px; }
.look { margin-top: 4px; padding: 27px 11px 0; height: 60px; }
.look h2 { margin: 0; font: 600 17px/24px "Open Sans", sans-serif; color: #23282d; }
.meta { width: 280px; margin-left: 20px; }
.box { background: #fff; border: 1px solid #e5e5e5; margin-bottom: 21px; }
.b1 { height: 67px; border-top: 0; padding-left: 100px; }
.sel-frag { height: 9px; width: 90px; border: 1px solid #ddd; border-top: 0; display: flex; justify-content: flex-end; }
.sel-frag i { width: 17px; background: #ddd; border: 1px solid #777; border-top: 0; }
.select { height: 28px; background: #fff; border: 1px solid #ddd; display: flex; justify-content: space-between; align-items: center; font-size: 14px; color: #32373c; }
.selbtn { width: 18px; height: 26px; border: 1px solid #707070; background: linear-gradient(90deg, #f2f2f2, #d2d2d2); display: flex; align-items: center; justify-content: center; }
.selbtn i { border: 4px solid transparent; border-top-color: #000; border-bottom: 0; }
.s1 { width: 102px; margin-top: 16px; padding-left: 55px; }
.b2 { height: 268px; }
.box h3 { margin: 0; height: 36px; border-bottom: 1px solid #eee; display: flex; align-items: center; justify-content: space-between; padding: 0 12px; font-size: 14px; font-weight: 600; color: #23282d; }
.up { border: 4px solid transparent; border-bottom: 6px solid #72777c; border-top: 0; margin: 0 1px 0 auto; }
.pub { height: 181px; border-bottom: 1px solid #ddd; padding: 10px 10px 0 9px; display: flex; flex-direction: column; }
.pc { align-self: flex-end; height: 29px; line-height: 26px; padding: 0 10px; border: 1px solid #ccc; border-bottom-width: 2px; border-radius: 3px; background: #f7f7f7; color: #555; }
.edfrag { margin: 12px 0 0 134px; height: 20px; line-height: 18px; width: 26px; }
.pub a { color: #0073aa; text-decoration: underline; }
.pub p { margin: 0; display: flex; align-items: center; gap: 3px; height: 34px; letter-spacing: -.1px; }
.pub p svg { margin-right: 5px; color: #82878c; }
.pub b { font-weight: 600; letter-spacing: -.25px; }
.rev { margin-top: 39px !important; }
.pubon { flex: none; }
.foot { height: 49px; background: #f5f5f5; display: flex; align-items: center; justify-content: space-between; padding: 0 10px 0 12px; }
.trash { color: #a00; padding-bottom: 2px; }
.upd { width: 70px; height: 31px; line-height: 29px; text-align: center; background: #0085ba; border: 1px solid #006799; border-radius: 3px; color: #fff; }
.b3 h3 { height: 37px; }
.attr { padding: 14px 12px; }
.attr label { display: block; font-weight: 600; line-height: 19px; }
.s2 { width: 179px; margin: 13px 0 14px 1px; padding-left: 6px; font-size: 14px; }
.scroll { width: 17px; background: #f1f1f1; border-left: 1px solid #ddd; display: flex; flex-direction: column; align-items: center; }
.sup { border: 4px solid transparent; border-bottom-color: #444; border-top: 0; margin-top: 7px; }
.sdn { border: 4px solid transparent; border-top-color: #444; border-bottom: 0; margin: auto 0 6px; }
.thumb { width: 15px; height: 75px; margin-top: 55px; border: 1px solid #949494; border-radius: 2px; background: linear-gradient(90deg, #f6f6f6, #d1d1d1); display: flex; flex-direction: column; align-items: center; justify-content: center; gap: 1px; }
.thumb i { width: 7px; height: 2px; background: #777; }

/* add element dialog */
.modal { position: absolute; left: 135px; top: 37px; width: 1079px; height: 291px; background: #fff; box-shadow: 0 1px 5px rgba(0,0,0,.4); }
.mhead { position: relative; height: 109px; background: #2b4b80; color: #fff; display: flex; flex-direction: column; justify-content: space-between; }
.hex { position: absolute; left: 0; top: 0; }
.mtop { position: relative; display: flex; align-items: center; height: 45px; padding: 14px 24px 0 18px; }
.mtop h1 { margin: 0; font: 300 20px/30px "Open Sans", sans-serif; letter-spacing: .13px; }
.msearch { width: 200px; height: 31px; background: #fff; border-radius: 5px; margin: 0 18px 0 auto; display: flex; align-items: center; padding-left: 12px; gap: 6px; color: #a7a7a7; font-size: 12px; line-height: 20px; }
.msearch em { padding-top: 2px; }
.x { margin-top: -3px; }
.mtabs { position: relative; display: flex; height: 48px; padding-left: 18px; font-size: 14px; line-height: 49px; }
.mtabs span { flex: none; text-align: center; }
.mtabs span:nth-child(1) { width: 43px; }
.mtabs span:nth-child(2) { width: 79px; letter-spacing: .12px; }
.mtabs span:nth-child(3) { width: 65px; letter-spacing: .15px; }
.mtabs span:nth-child(4) { width: 89px; letter-spacing: .18px; }
.mtabs span:nth-child(5) { width: 156px; letter-spacing: .17px; }
.mtabs span:nth-child(6) { width: 77px; }
.mtabs span:nth-child(7) { width: 127px; }
.mtabs span:nth-child(8) { width: 104px; letter-spacing: .2px; }
.mtabs .on { background: #fff; color: #666; border-radius: 5px 5px 0 0; }
.grid { display: grid; grid-template-columns: repeat(6, 173.8px); grid-auto-rows: 70px; padding: 24px 18px 0; }
.cell { display: flex; align-items: center; gap: 9px; padding: 3px 0 0 9px; background: #f4f4f4; border-right: 1px solid #fafafa; border-bottom: 2px solid #fafafa; color: #0073aa; font-size: 14px; line-height: 14px; letter-spacing: .5px; -webkit-text-stroke: .25px; }
.cell:nth-child(n+7) { letter-spacing: .35px; }
.cell svg { width: 32px; height: 32px; margin-top: 3px; border: 1px solid #999; background: #fff; color: #e2a079; }
.nib-dot { fill: #cf5c21; }

/* taskbar */
.taskbar { position: relative; height: 40px; flex: none; display: flex; align-items: center; border-top: 1px solid #17334f; background: linear-gradient(rgba(255,255,255,.35), rgba(255,255,255,0) 3px), linear-gradient(90deg, #19517f 0, #2d83b4 7%, #3f9bcd 20%, #48a3d4 38%, #3187c8 50%, #2272b7 62%, #1b62a8 73%, #1a62ae 82%, #15467b 88%, #123a67 100%); }
.swoosh { position: absolute; left: 0; top: 0; filter: blur(1.500px); }
.k { position: relative; flex: none; display: flex; align-items: center; justify-content: center; height: 39px; width: 62px; }
.start { width: 54px; } .ie { width: 68px; }
.win { width: 58px; margin-right: 4px; border: 1px solid #2a5f84; border-radius: 3px; background: linear-gradient(135deg, rgba(255,255,255,.5), rgba(255,255,255,.15)); box-shadow: inset 0 0 0 1px rgba(255,255,255,.55); }
.act { background: rgba(255,255,255,.6); }
.npp { font: 13px "Liberation Sans", sans-serif; fill: #111; }
.tray { position: relative; margin-left: auto; display: flex; align-items: center; height: 39px; }
.tray svg { margin-right: 8px; }
.tup { border: 4px solid transparent; border-bottom-color: #fff; border-top: 0; margin-right: 14px; }
.tray .vol { margin-right: 3px; }
.clock { width: 75px; margin-left: 5px; text-align: center; color: #fff; font-size: 12px; line-height: 17px; letter-spacing: -.4px; }
.showdesk { width: 13px; height: 38px; border: 1px solid #7f9dbb; border-right-color: #34577d; background: linear-gradient(135deg, #5d83aa, #193e6b); }
```
